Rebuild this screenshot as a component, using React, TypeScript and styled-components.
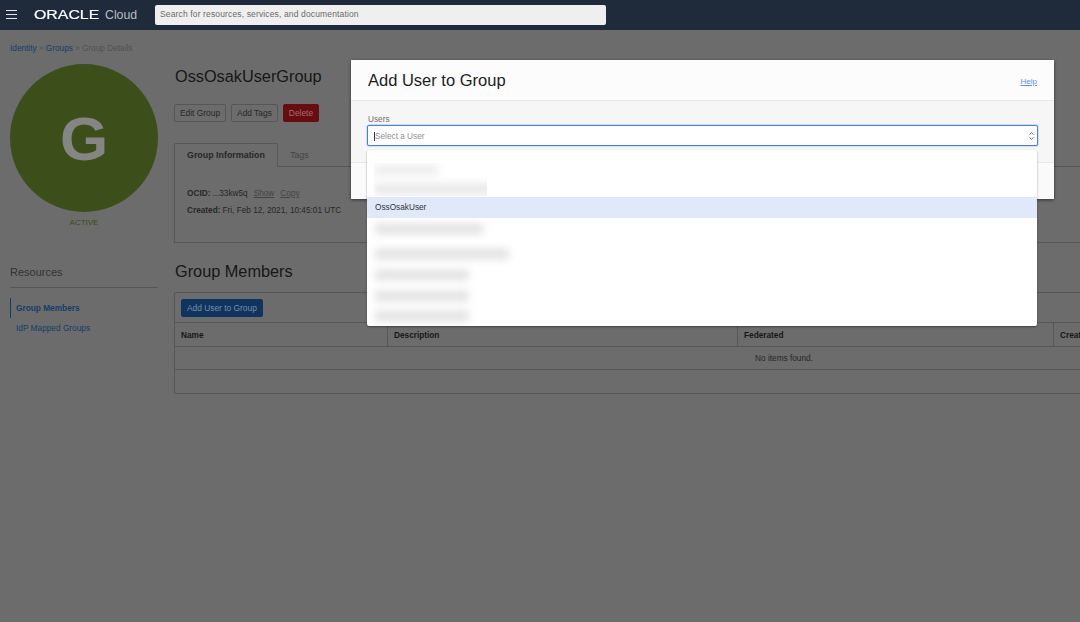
import styled, { createGlobalStyle } from 'styled-components'

const GlobalStyle = createGlobalStyle`
  html, body {
    margin: 0;
    padding: 0;
    height: 622px;
    overflow: hidden;
    background: #6c6c6c;
    font-family: 'Liberation Sans', Arial, sans-serif;
  }
`

const Page = styled.div`
  position: relative;
  width: 1080px;
  height: 622px;
  overflow: hidden;
  background: #6c6c6c;
  color: #262626;
`

const Header = styled.header`
  display: flex;
  align-items: center;
  height: 29px;
  padding: 0 0 1px 6px;
  background: #1f2a3a;
`

const Logo = styled.div`
  display: flex;
  align-items: center;
  margin-left: 17px;
  width: 121px;
  color: #fff;
`

const LogoWord = styled.span`
  display: inline-block;
  width: 71px;
  font-size: 12.5px;
  font-weight: 400;
  -webkit-text-stroke: 0.2px #fff;
  transform: scaleX(1.27);
  transform-origin: left center;
`

const LogoCloud = styled.span`
  font-size: 12.3px;
  color: #b9bdc3;
`

const Search = styled.div`
  display: flex;
  align-items: center;
  width: 446px;
  height: 19px;
  padding: 0 0 1px 5px;
  background: #efefef;
  border-radius: 2px;
  font-size: 8.5px;
  letter-spacing: 0.14px;
  color: #6b6b6b;
`

const Crumbs = styled.nav`
  padding: 14px 0 0 10px;
  height: 20px;
  font-size: 8.25px;
  color: #525252;
`

const CrumbLink = styled.span`
  color: #163c68;
`

const Main = styled.div`
  display: flex;
  padding-left: 10px;
  gap: 16px;
`

const Side = styled.aside`
  flex: 0 0 148px;
  display: flex;
  flex-direction: column;
`

const Avatar = styled.div`
  display: flex;
  align-items: center;
  justify-content: center;
  width: 148px;
  height: 148px;
  border-radius: 50%;
  background: #3c4f1a;
  font-size: 62px;
  font-weight: 700;
  color: #858585;
`

const Status = styled.div`
  margin-top: 6px;
  text-align: center;
  font-size: 8px;
  color: #374c12;
`

const ResourcesTitle = styled.div`
  margin-top: 39px;
  padding-bottom: 9px;
  border-bottom: 1px solid #565656;
  font-size: 11px;
  color: #333;
`

const SideNav = styled.nav`
  display: flex;
  flex-direction: column;
  margin-top: 10px;
`

const SideItem = styled.a<{ $active?: boolean }>`
  display: flex;
  align-items: center;
  height: 20px;
  padding-left: 5px;
  border-left: 1px solid ${({ $active }) => ($active ? '#163c68' : 'transparent')};
  font-size: 8.3px;
  font-weight: ${({ $active }) => ($active ? 700 : 400)};
  color: #163c68;
`

const Content = styled.main`
  flex: 0 0 1220px;
  display: flex;
  flex-direction: column;
  margin-top: 2px;
`

const Heading = styled.h1`
  margin: 0;
  height: 20px;
  padding-left: 1px;
  line-height: 20px;
  font-size: 16.3px;
  font-weight: 400;
  color: #171717;
`

const Actions = styled.div`
  display: flex;
  gap: 5px;
  margin-top: 18px;
`

const Button = styled.button<{ $kind?: 'danger' | 'primary' }>`
  height: 18px;
  padding: 0 5px;
  border: 1px solid
    ${({ $kind }) =>
      $kind === 'danger' ? '#660d12' : $kind === 'primary' ? '#0f3460' : '#565656'};
  border-radius: 2px;
  background: ${({ $kind }) =>
    $kind === 'danger' ? '#660d12' : $kind === 'primary' ? '#0f3460' : 'transparent'};
  color: ${({ $kind }) =>
    $kind === 'danger' ? '#a86c70' : $kind === 'primary' ? '#7a8ea9' : '#272727'};
  font-family: inherit;
  font-size: 8.4px;
`

const Tabs = styled.div`
  display: flex;
  margin-top: 21px;
  height: 23px;
  border-bottom: 1px solid #565656;
`

const Tab = styled.div<{ $active?: boolean }>`
  display: flex;
  align-items: center;
  height: ${({ $active }) => ($active ? '22px' : '21px')};
  padding: 0 ${({ $active }) => ($active ? '12px' : '11px')} 1px;
  border: 1px solid ${({ $active }) => ($active ? '#565656' : 'transparent')};
  border-bottom: 0;
  border-radius: 2px 2px 0 0;
  background: #6c6c6c;
  font-size: 8.9px;
  font-weight: ${({ $active }) => ($active ? 700 : 400)};
  color: ${({ $active }) => ($active ? '#272727' : '#444')};
`

const InfoPanel = styled.section`
  display: flex;
  flex-direction: column;
  gap: 8px;
  height: 76px;
  padding: 22px 12px 0;
  box-sizing: border-box;
  border: 1px solid #565656;
  border-top: 0;
  font-size: 8.25px;
  color: #272727;
`

const InfoRow = styled.div`
  display: flex;
  gap: 6px;
  height: 9px;
  line-height: 9px;
`

const Label = styled.b`
  margin-right: -4px;
`

const Muted = styled.u`
  color: #444;
`

const SectionTitle = styled(Heading)`
  margin-top: 18px;
`

const Members = styled.section`
  margin-top: 11px;
  border: 1px solid #565656;
  border-radius: 2px;
  height: 102px;
  box-sizing: border-box;
`

const Toolbar = styled.div`
  display: flex;
  align-items: center;
  height: 29px;
  padding-left: 6px;
  border-bottom: 1px solid #565656;
`

const TableHead = styled.div`
  display: grid;
  grid-template-columns: 212px 350px 316px 1fr;
  height: 23px;
  border-bottom: 1px solid #565656;
`

const HeadCell = styled.div`
  display: flex;
  align-items: center;
  padding: 1px 0 0 6px;
  border-left: 1px solid #565656;
  font-size: 8.25px;
  font-weight: 700;
  color: #171717;

  &:first-child {
    border-left: 0;
  }
`

const EmptyRow = styled.div`
  height: 22px;
  line-height: 24px;
  border-bottom: 1px solid #565656;
  text-align: center;
  font-size: 8.25px;
  color: #272727;
`

const Modal = styled.div`
  position: absolute;
  left: 351px;
  top: 60px;
  width: 703px;
  height: 139px;
  display: flex;
  flex-direction: column;
  background: #fafafa;
  box-shadow: 0 1px 3px rgba(0, 0, 0, 0.55);
`

const ModalHead = styled.div`
  display: flex;
  align-items: center;
  justify-content: space-between;
  height: 40px;
  padding: 0 17px;
  border-bottom: 1px solid #e8e8e8;
  background: #fcfcfc;
`

const ModalTitle = styled.h2`
  margin: 1px 0 0;
  font-size: 16.5px;
  font-weight: 400;
  color: #1c1c1c;
`

const HelpLink = styled.a`
  margin-top: 2px;
  font-size: 8px;
  text-decoration: underline;
  color: #5b93e0;
`

const ModalBody = styled.div`
  height: 62px;
  padding: 14px 16px 0;
  box-sizing: border-box;
  border-bottom: 1px solid #e8e8e8;
  background: #f6f6f6;
`

const FieldLabel = styled.div`
  height: 10px;
  padding-left: 1px;
  line-height: 9px;
  font-size: 8.25px;
  color: #707070;
`

const Select = styled.div`
  display: flex;
  align-items: center;
  justify-content: space-between;
  height: 21px;
  padding: 1px 3px 0 6px;
  box-sizing: border-box;
  border: 1px solid #4a80e4;
  border-radius: 2px;
  background: #fff;
  box-shadow: 0 0 0 0.5px #a9c5f2;
  font-size: 8.25px;
  color: #8f8f8f;
`

const Placeholder = styled.span`
  border-left: 1px solid #333;
`

const Dropdown = styled.div`
  position: absolute;
  left: 16px;
  top: 90px;
  width: 670px;
  height: 176px;
  padding-top: 10px;
  box-sizing: border-box;
  overflow: hidden;
  border-radius: 2px;
  background: #fff;
  box-shadow: 0 1px 2px rgba(0, 0, 0, 0.4);
`

const BlurredGroup = styled.div`
  width: 113px;
  height: 33px;
  margin: 3px 0 1px 7px;
  overflow: hidden;
`

const BlurredList = styled.div`
  display: flex;
  flex-direction: column;
  margin-top: 6px;
  padding-left: 8px;
`

const BlurBar = styled.div<{ $width: number; $tone?: string; $top?: number }>`
  width: ${({ $width }) => $width}px;
  height: 10px;
  margin-top: ${({ $top }) => $top ?? 11}px;
  background: ${({ $tone }) => $tone ?? '#e0e0e0'};
  filter: blur(4.5px);
`

const Option = styled.div`
  display: flex;
  align-items: center;
  height: 21px;
  padding-left: 8px;
  background: #dfe9fa;
  font-size: 8.25px;
  color: #333;
`

function Hamburger() {
  return (
    <svg width="11" height="9" viewBox="0 0 11 9" fill="none" stroke="#e4e6e9" strokeWidth="1">
      <path d="M0 .5h11M0 4.5h11M0 8.5h11" />
    </svg>
  )
}

function UpDownChevrons() {
  return (
    <svg width="5" height="8" viewBox="0 0 5 8" fill="none" stroke="#555" strokeWidth="0.9">
      <path d="M.5 2.6 2.5.7l2 1.9M.5 5.4l2 1.9 2-1.9" />
    </svg>
  )
}

export default function App() {
  return (
    <Page>
      <GlobalStyle />
      <Header>
        <Hamburger />
        <Logo>
          <LogoWord>ORACLE</LogoWord>
          <LogoCloud>Cloud</LogoCloud>
        </Logo>
        <Search>Search for resources, services, and documentation</Search>
      </Header>
      <Crumbs>
        <CrumbLink>Identity</CrumbLink> » <CrumbLink>Groups</CrumbLink> » Group Details
      </Crumbs>
      <Main>
        <Side>
          <Avatar>G</Avatar>
          <Status>ACTIVE</Status>
          <ResourcesTitle>Resources</ResourcesTitle>
          <SideNav>
            <SideItem $active>Group Members</SideItem>
            <SideItem>IdP Mapped Groups</SideItem>
          </SideNav>
        </Side>
        <Content>
          <Heading>OssOsakUserGroup</Heading>
          <Actions>
            <Button>Edit Group</Button>
            <Button>Add Tags</Button>
            <Button $kind="danger">Delete</Button>
          </Actions>
          <Tabs>
            <Tab $active>Group Information</Tab>
            <Tab>Tags</Tab>
          </Tabs>
          <InfoPanel>
            <InfoRow>
              <Label>OCID:</Label> ...33kw5q <Muted>Show</Muted> <Muted>Copy</Muted>
            </InfoRow>
            <InfoRow>
              <Label>Created:</Label> Fri, Feb 12, 2021, 10:45:01 UTC
            </InfoRow>
          </InfoPanel>
          <SectionTitle>Group Members</SectionTitle>
          <Members>
            <Toolbar>
              <Button $kind="primary">Add User to Group</Button>
            </Toolbar>
            <TableHead>
              <HeadCell>Name</HeadCell>
              <HeadCell>Description</HeadCell>
              <HeadCell>Federated</HeadCell>
              <HeadCell>Created</HeadCell>
            </TableHead>
            <EmptyRow>No items found.</EmptyRow>
          </Members>
        </Content>
      </Main>
      <Modal>
        <ModalHead>
          <ModalTitle>Add User to Group</ModalTitle>
          <HelpLink>Help</HelpLink>
        </ModalHead>
        <ModalBody>
          <FieldLabel>Users</FieldLabel>
          <Select>
            <Placeholder>Select a User</Placeholder>
            <UpDownChevrons />
          </Select>
        </ModalBody>
        <Dropdown>
          <BlurredGroup>
            <BlurBar $width={64} $tone="#ececec" $top={2} />
            <BlurBar $width={125} $tone="#e6e6e6" $top={9} />
          </BlurredGroup>
          <Option>OssOsakUser</Option>
          <BlurredList>
            <BlurBar $width={108} $top={0} />
            <BlurBar $width={134} $top={15} />
            <BlurBar $width={94} />
            <BlurBar $width={94} />
            <BlurBar $width={94} $top={10} />
          </BlurredList>
        </Dropdown>
      </Modal>
    </Page>
  )
}
